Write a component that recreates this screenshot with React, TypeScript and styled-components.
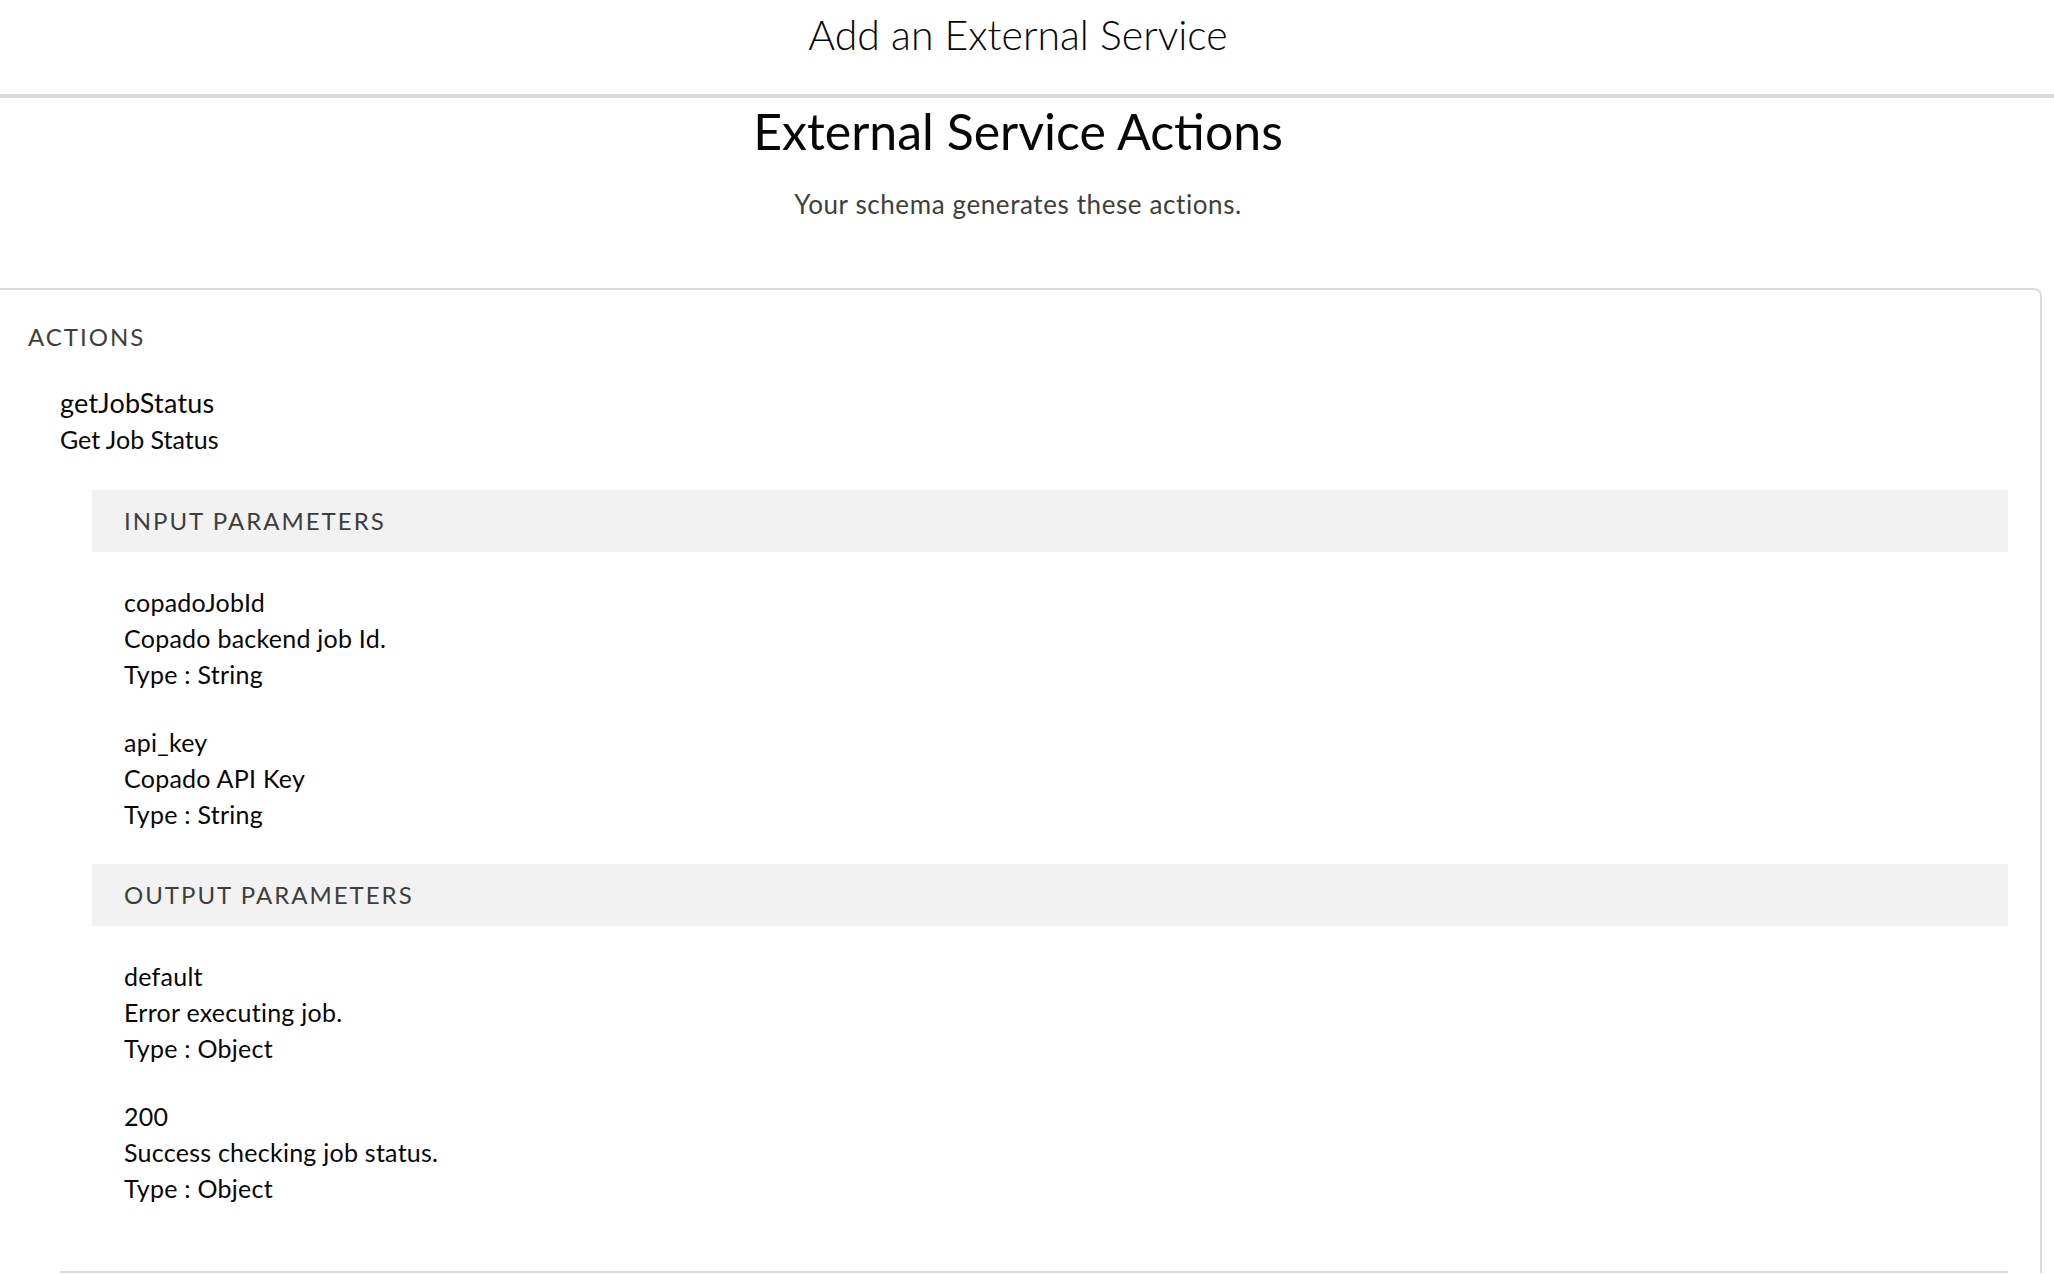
import styled, { createGlobalStyle } from "styled-components";

const GlobalStyle = createGlobalStyle`
    html, body {
        margin: 0;
        padding: 0;
        background: #ffffff;
        font-family: Lato, "Open Sans", "Liberation Sans", sans-serif;
        color: #080707;
    }
    body {
        overflow: hidden;
    }
`

type Param = {
    name: string;
    description: string;
    type: string;
}

const inputParams: Param[] = [
    { name: "copadoJobId", description: "Copado backend job Id.", type: "String" },
    { name: "api_key", description: "Copado API Key", type: "String" },
]

const outputParams: Param[] = [
    { name: "default", description: "Error executing job.", type: "Object" },
    { name: "200", description: "Success checking job status.", type: "Object" },
]

const Header = styled.header`
    height: 94px;
    padding-right: 18px;
    border-bottom: 4px solid #dddbda;
    text-align: center;
`
const HeaderTitle = styled.h1`
    margin: 0;
    font-size: 41px;
    font-weight: 300;
    line-height: 70px;
    color: #080707;
`
const Intro = styled.div`
    text-align: center;
    padding: 3px 18px 0 0;
`
const PageTitle = styled.h2`
    margin: 0;
    font-size: 50px;
    font-weight: 400;
    line-height: 60px;
`
const Subtitle = styled.p`
    margin: 25px 0 0;
    font-size: 26px;
    letter-spacing: 0.6px;
    line-height: 36px;
    color: #3e3e3c;
`
const Card = styled.section`
    margin: 66px 12px 0 -12px;
    padding: 32px 32px 0 38px;
    border: 2px solid #dddbda;
    border-bottom: none;
    border-radius: 8px 8px 0 0;
`
const SectionLabel = styled.div<{ $bar?: boolean }>`
    font-size: 24px;
    line-height: ${(p) => (p.$bar ? "62px" : "30px")};
    letter-spacing: 2px;
    text-transform: uppercase;
    color: #3e3e3c;
    padding-left: ${(p) => (p.$bar ? "32px" : "0")};
    background: ${(p) => (p.$bar ? "#f3f2f2" : "transparent")};
`
const ActionItem = styled.div`
    margin: 33px 0 0 32px;
    padding-bottom: 33px;
    border-bottom: 2px solid #dddbda;
`
const ActionName = styled.div`
    font-size: 27px;
    letter-spacing: 0.2px;
    line-height: 36px;
`
const ActionLabel = styled.div`
    font-size: 25px;
    line-height: 36px;
`
const ParamSection = styled.div`
    margin: 33px 0 0 32px;
`
const ParamList = styled.div`
    display: flex;
    flex-direction: column;
    gap: 32px;
    padding: 32px 0 32px 32px;
`
const ParamBlock = styled.div`
    font-size: 25px;
    letter-spacing: 0.25px;
    line-height: 36px;
`

const ParamGroup = ({ title, params }: { title: string; params: Param[] }) => (
    <>
        <SectionLabel $bar>{title}</SectionLabel>
        <ParamList>
            {params.map((p) => (
                <ParamBlock key={p.name}>
                    <div>{p.name}</div>
                    <div>{p.description}</div>
                    <div>Type : {p.type}</div>
                </ParamBlock>
            ))}
        </ParamList>
    </>
)

export default function App() {
    return (
        <>
            <GlobalStyle />
            <Header>
                <HeaderTitle>Add an External Service</HeaderTitle>
            </Header>
            <Intro>
                <PageTitle>External Service Actions</PageTitle>
                <Subtitle>Your schema generates these actions.</Subtitle>
            </Intro>
            <Card>
                <SectionLabel>Actions</SectionLabel>
                <ActionItem>
                    <ActionName>getJobStatus</ActionName>
                    <ActionLabel>Get Job Status</ActionLabel>
                    <ParamSection>
                        <ParamGroup title="Input Parameters" params={inputParams} />
                        <ParamGroup title="Output Parameters" params={outputParams} />
                    </ParamSection>
                </ActionItem>
            </Card>
        </>
    );
}
